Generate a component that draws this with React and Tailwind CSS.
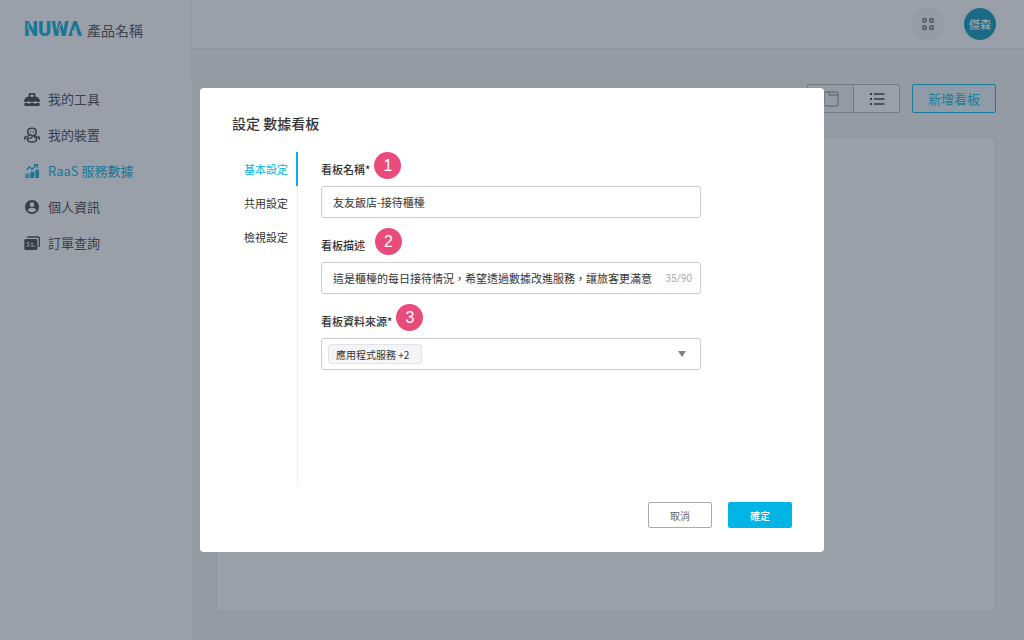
// src/App.jsx

import React, { useState } from 'react';

function ToolboxIcon() {
  return (
    <svg viewBox="0 0 48 48" className="size-4" fill="currentColor" aria-hidden="true">
      <path d="M17 6h14q3 0 3 3v8h5l7 7q1 1 1 3v6H1v-6q0-2 1-3l7-7h5V9q0-3 3-3Zm2 5v6h10v-6Z" fillRule="evenodd" />
      <path d="M1 36h46v6q0 3-3 3H4q-3 0-3-3Z" />
      <path d="M12 30h4v9h-4ZM32 30h4v9h-4Z" fill="white" />
    </svg>
  );
}

function RobotIcon() {
  return (
    <svg viewBox="0 0 48 48" className="size-4" fill="none" stroke="currentColor" strokeWidth="4.5" strokeLinecap="round" aria-hidden="true">
      <path d="M32 23c3-2 5-5 5-8 0-7-5-11-13-11S11 8 11 15c0 6 4 8 9 9l8 2c4 1 6 3 6 7" />
      <path d="M14 25c-3 3-5 7-4 12 1 5 6 8 14 8s13-3 14-8c1-5-1-9-4-12" />
      <path d="M14 34c5 1 9-1 11-5" strokeWidth="4" />
      <path d="M20 13v2M28 13v2" strokeWidth="3" />
      <path d="M5 29c-2 2-3 4-3 7M43 29c2 2 3 4 3 7" strokeWidth="5" />
    </svg>
  );
}

function ChartIcon() {
  return (
    <svg viewBox="0 0 48 48" className="size-4" fill="currentColor" aria-hidden="true">
      <path d="M4 32h12v13H4Zm4 4v5h4v-5Z" fillRule="evenodd" />
      <path d="M19 26h12v19H19ZM34 20h11v25H34Z" />
      <path d="m8 21 8-9 8 7L36 7M29 5h11v11" fill="none" stroke="currentColor" strokeWidth="4" />
    </svg>
  );
}

function UserIcon() {
  return (
    <svg viewBox="0 0 48 48" className="size-4" aria-hidden="true">
      <circle cx="24" cy="24" r="21" fill="currentColor" />
      <circle cx="24" cy="17" r="7" fill="white" />
      <path d="M11 34c1-6 8-8 13-8s12 2 13 8c-3 4-8 6-13 6s-10-2-13-6Z" fill="white" />
    </svg>
  );
}

function OrderIcon() {
  return (
    <svg viewBox="0 0 48 48" className="size-4" aria-hidden="true">
      <path d="M10 8q0-2 3-2h29q4 0 4 4v21q0 4-4 4" fill="none" stroke="currentColor" strokeWidth="4" />
      <rect x="1" y="12" width="39" height="33" rx="4" fill="currentColor" />
      <path d="M16 23c-4-3-8-1-7 2s7 2 7 6-5 4-8 1M21 26h7M21 33h12" fill="none" stroke="white" strokeWidth="3" />
    </svg>
  );
}

function Logo() {
  return (
    <svg viewBox="0 0 60 28" className="h-7 w-[60px] overflow-visible" role="img" aria-label="NUWA">
      <text x="0" y="20" className="fill-[#00a9d8] font-['Roboto',sans-serif] text-[20px] font-black">NUWA</text>
      <path d="M4 7v6M38 5l-4 10" fill="none" stroke="white" strokeWidth="1" />
      <path d="M48 16h5" fill="none" stroke="white" strokeWidth="3" />
    </svg>
  );
}

const NAV_ITEMS = [
  { label: '我的工具', icon: ToolboxIcon },
  { label: '我的裝置', icon: RobotIcon },
  { label: 'RaaS 服務數據', icon: ChartIcon, active: true },
  { label: '個人資訊', icon: UserIcon },
  { label: '訂單查詢', icon: OrderIcon },
];

const TABS = ['基本設定', '共用設定', '檢視設定'];

function Sidebar() {
  return (
    <aside className="w-48 shrink-0 bg-white">
      <div className="flex h-20 items-start border-r border-[#f1f2f4] pt-4 pl-6">
        <Logo />
        <span className="ml-[3px] text-[14px] leading-7 text-[#444]">產品名稱</span>
      </div>
      <nav className="flex flex-col pt-px">
        {NAV_ITEMS.map(({ label, icon: Icon, active }) => (
          <a
            key={label}
            href="#"
            className={`flex h-9 items-center gap-2 pl-6 text-[13px] ${active ? 'text-[#00a9d8]' : 'text-[#3a3a3f]'}`}
          >
            <Icon />
            <span>{label}</span>
          </a>
        ))}
      </nav>
    </aside>
  );
}

function Header() {
  return (
    <header className="flex h-[49px] items-center justify-end gap-5 border-b border-gray-200 bg-white pr-7">
      <button type="button" aria-label="應用程式" className="flex size-8 items-center justify-center rounded-full bg-[#f3f8f8]">
        <svg viewBox="0 0 12 12" className="size-3 text-[#66666c]" fill="none" stroke="currentColor" strokeWidth="1.4">
          <rect x="0.8" y="0.8" width="3.2" height="3.2" rx="0.8" />
          <rect x="8" y="0.8" width="3.2" height="3.2" rx="0.8" />
          <rect x="0.8" y="8" width="3.2" height="3.2" rx="0.8" />
          <rect x="8" y="8" width="3.2" height="3.2" rx="0.8" />
        </svg>
      </button>
      <button type="button" className="size-8 rounded-full bg-[#0095b8] text-[11px] font-medium text-white">
        傑森
      </button>
    </header>
  );
}

function Toolbar() {
  return (
    <div className="flex h-[29px] justify-end gap-3">
      <div className="flex w-[93px] overflow-hidden rounded-xs border border-[#b2b2b6]">
        <button type="button" aria-label="卡片檢視" className="flex flex-1 items-center justify-center">
          <svg viewBox="0 0 16 16" className="size-4 text-[#a2a2a8]" fill="none" stroke="currentColor" strokeWidth="1.4">
            <rect x="1" y="1" width="14" height="14" rx="2" />
            <path d="M6 1v2q0 1 1 1h8" />
          </svg>
        </button>
        <button type="button" aria-label="清單檢視" className="flex flex-1 items-center justify-center border-l border-[#b2b2b6] bg-white">
          <svg viewBox="0 0 16 14" className="h-[14px] w-4 text-[#333338]" fill="none" stroke="currentColor" strokeWidth="1.5">
            <path d="M5 2h10.5M5 7h10.5M5 12h10.5" />
            <path d="M1 2h2M1 7h2M1 12h2" strokeWidth="2.2" />
          </svg>
        </button>
      </div>
      <button type="button" className="w-[84px] rounded-xs border border-[#00b4e5] bg-[#e9f7fb] text-[13px] text-[#00b4e5]">
        新增看板
      </button>
    </div>
  );
}

function StepBadge({ children }) {
  return (
    <span className="flex size-[27px] items-center justify-center rounded-full bg-[#e94b7b] font-['Liberation_Sans',sans-serif] text-base text-white">
      {children}
    </span>
  );
}

function Field({ id, label, step, gap = 'gap-1', children }) {
  return (
    <div>
      <div className={`flex h-[34px] items-start ${gap}`}>
        <label htmlFor={id} className="text-[11px] leading-[34px] font-medium text-[#333]">{label}</label>
        <StepBadge>{step}</StepBadge>
      </div>
      {children}
    </div>
  );
}

function SettingsDialog() {
  const [tab, setTab] = useState(TABS[0]);
  const [name, setName] = useState('友友飯店-接待櫃檯');
  const [description, setDescription] = useState('這是櫃檯的每日接待情況，希望透過數據改進服務，讓旅客更滿意');

  return (
    <div className="fixed inset-0 flex items-center justify-center bg-gray-700/50">
      <form
        role="dialog"
        aria-modal="true"
        aria-labelledby="dialog-title"
        onSubmit={(e) => e.preventDefault()}
        className="w-full max-w-[624px] rounded-sm bg-white px-8 py-6"
      >
        <h2 id="dialog-title" className="text-[14px] leading-[22px] font-medium text-[#333]">設定 數據看板</h2>

        <div className="mt-[18px] flex min-h-[332px] gap-[23px]">
          {/* Tabs */}
          <div role="tablist" className="flex w-[66px] shrink-0 flex-col border-r border-[#eee]">
            {TABS.map((item) => (
              <button
                key={item}
                type="button"
                role="tab"
                aria-selected={tab === item}
                onClick={() => setTab(item)}
                className={`-mr-px h-[34px] border-r-2 pl-3 text-left text-[11px] whitespace-nowrap ${
                  tab === item ? 'border-[#00b4e5] text-[#00b4e5]' : 'border-transparent text-[#333]'
                }`}
              >
                {item}
              </button>
            ))}
          </div>

          {/* Form fields */}
          <div className="flex w-full max-w-[380px] flex-col gap-[10px]">
            <Field id="board-name" label="看板名稱*" step={1}>
              <input
                id="board-name"
                value={name}
                onChange={(e) => setName(e.target.value)}
                className="block h-8 w-full rounded-[3px] border border-[#ccc] px-[11px] text-[11px] text-[#333] outline-none"
              />
            </Field>

            <Field id="board-description" label="看板描述" step={2} gap="gap-[10px]">
              <div className="flex h-8 items-center rounded-[3px] border border-[#ccc] pr-2">
                <input
                  id="board-description"
                  value={description}
                  maxLength={90}
                  onChange={(e) => setDescription(e.target.value)}
                  className="h-full min-w-0 flex-1 pl-[11px] text-[11px] text-[#333] outline-none"
                />
                <span className="font-['Roboto',sans-serif] text-[10px] text-[#aaa]">35/90</span>
              </div>
            </Field>

            <Field id="board-source" label="看板資料來源*" step={3}>
              <div className="relative h-8 rounded-[3px] border border-[#ccc]">
                <span className="absolute top-[5px] left-[6px] h-5 w-[94px] rounded-[3px] border border-[#e2e3e8] bg-[#f4f5f9]" />
                <select
                  id="board-source"
                  className="relative h-full w-full appearance-none bg-transparent pl-[14px] text-[10px] text-[#333] outline-none"
                >
                  <option>應用程式服務 +2</option>
                </select>
                <svg viewBox="0 0 8 6" className="pointer-events-none absolute top-3 right-[14px] h-[6px] w-2" fill="#808080" aria-hidden="true">
                  <path d="M0 0h8L4 6Z" />
                </svg>
              </div>
            </Field>
          </div>
        </div>

        {/* Actions */}
        <div className="mt-[18px] flex justify-end gap-4">
          <button type="button" className="h-[26px] w-16 rounded-xs border border-[#aaa] text-[10px] text-[#666]">取消</button>
          <button type="submit" className="h-[26px] w-16 rounded-xs bg-[#00b4e5] text-[10px] font-medium text-white">確定</button>
        </div>
      </form>
    </div>
  );
}

export default function App() {
  return (
    <div className="flex min-h-screen bg-[#f3f4f6] font-['Noto_Sans_CJK_TC',sans-serif]">
      <Sidebar />
      <div className="flex min-w-0 flex-1 flex-col">
        <Header />
        <main className="flex flex-1 flex-col gap-6 pt-[35px] pr-7 pb-7 pl-6">
          <Toolbar />
          <section className="flex-1 rounded-sm border border-[#e8e9ed] bg-white" />
        </main>
      </div>
      <SettingsDialog />
    </div>
  );
}
